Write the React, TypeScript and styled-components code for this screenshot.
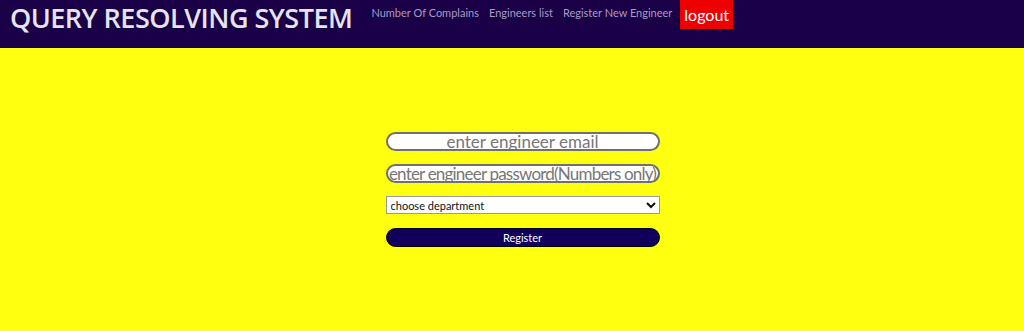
import React from "react";
import styled, { createGlobalStyle } from "styled-components";

const Global = createGlobalStyle`
  html, body { margin: 0; padding: 0; height: 100%; }
  body { font-family: "Lato", "Open Sans", sans-serif; background: #ffff10; }
  #root { height: 100%; }
`;

const Page = styled.div`
  display: flex;
  flex-direction: column;
  height: 331px;
`;

const Header = styled.header`
  display: flex;
  align-items: flex-start;
  height: 48px;
  background: #1a0046;
  flex-shrink: 0;
`;

const Title = styled.h1`
  margin: -1px 0 0 10px;
  font-family: "Open Sans", sans-serif;
  font-size: 27px;
  font-weight: 600;
  color: #e6e4ee;
  letter-spacing: -0.5px;
  white-space: nowrap;
`;

const Nav = styled.nav`
  display: flex;
  align-items: flex-start;
  margin-left: 19px;
  gap: 10px;
`;

const NavLink = styled.a`
  margin-top: 6px;
  font-size: 11px;
  color: #a79bc4;
  text-decoration: none;
  white-space: nowrap;
`;

const Logout = styled.button`
  margin-left: 7px;
  height: 30px;
  padding: 0 4px;
  background: #ee0000;
  color: #fff;
  border: 1px solid #000;
  border-top: none;
  font-family: inherit;
  font-size: 16px;
`;

const Main = styled.main`
  flex: 1;
  display: flex;
  align-items: center;
  justify-content: center;
  padding-left: 21px;
`;

const Form = styled.form`
  display: flex;
  flex-direction: column;
  gap: 13px;
  width: 274px;
`;

const Input = styled.input<{ $tight?: boolean }>`
  box-sizing: border-box;
  width: 100%;
  height: 19px;
  padding: 0;
  border: 2px solid #707070;
  border-radius: 10px;
  background: #fff;
  font-family: inherit;
  font-size: 17px;
  letter-spacing: ${(p) => (p.$tight ? "-0.8px" : "0")};
  text-align: center;
  &::placeholder { color: #777; }
`;

const Select = styled.select`
  box-sizing: border-box;
  width: 100%;
  height: 18px;
  padding: 0;
  border: 1px solid #999;
  background: #fff;
  font-family: inherit;
  font-size: 11px;
  color: #111;
`;

const Submit = styled.button`
  box-sizing: border-box;
  width: 100%;
  height: 19px;
  margin-top: 1px;
  border: 1px solid #000;
  border-radius: 10px;
  background: #10005c;
  color: #fff;
  font-family: inherit;
  font-size: 11px;
`;

export default function App() {
  return (
    <Page>
      <Global />
      <Header>
        <Title>QUERY RESOLVING SYSTEM</Title>
        <Nav>
          <NavLink href="#">Number Of Complains</NavLink>
          <NavLink href="#">Engineers list</NavLink>
          <NavLink href="#">Register New Engineer</NavLink>
        </Nav>
        <Logout>logout</Logout>
      </Header>
      <Main>
        <Form onSubmit={(e) => e.preventDefault()}>
          <Input type="email" placeholder="enter engineer email" />
          <Input $tight type="password" placeholder="enter engineer password(Numbers only)" />
          <Select defaultValue="">
            <option value="">choose department</option>
          </Select>
          <Submit type="submit">Register</Submit>
        </Form>
      </Main>
    </Page>
  );
}
